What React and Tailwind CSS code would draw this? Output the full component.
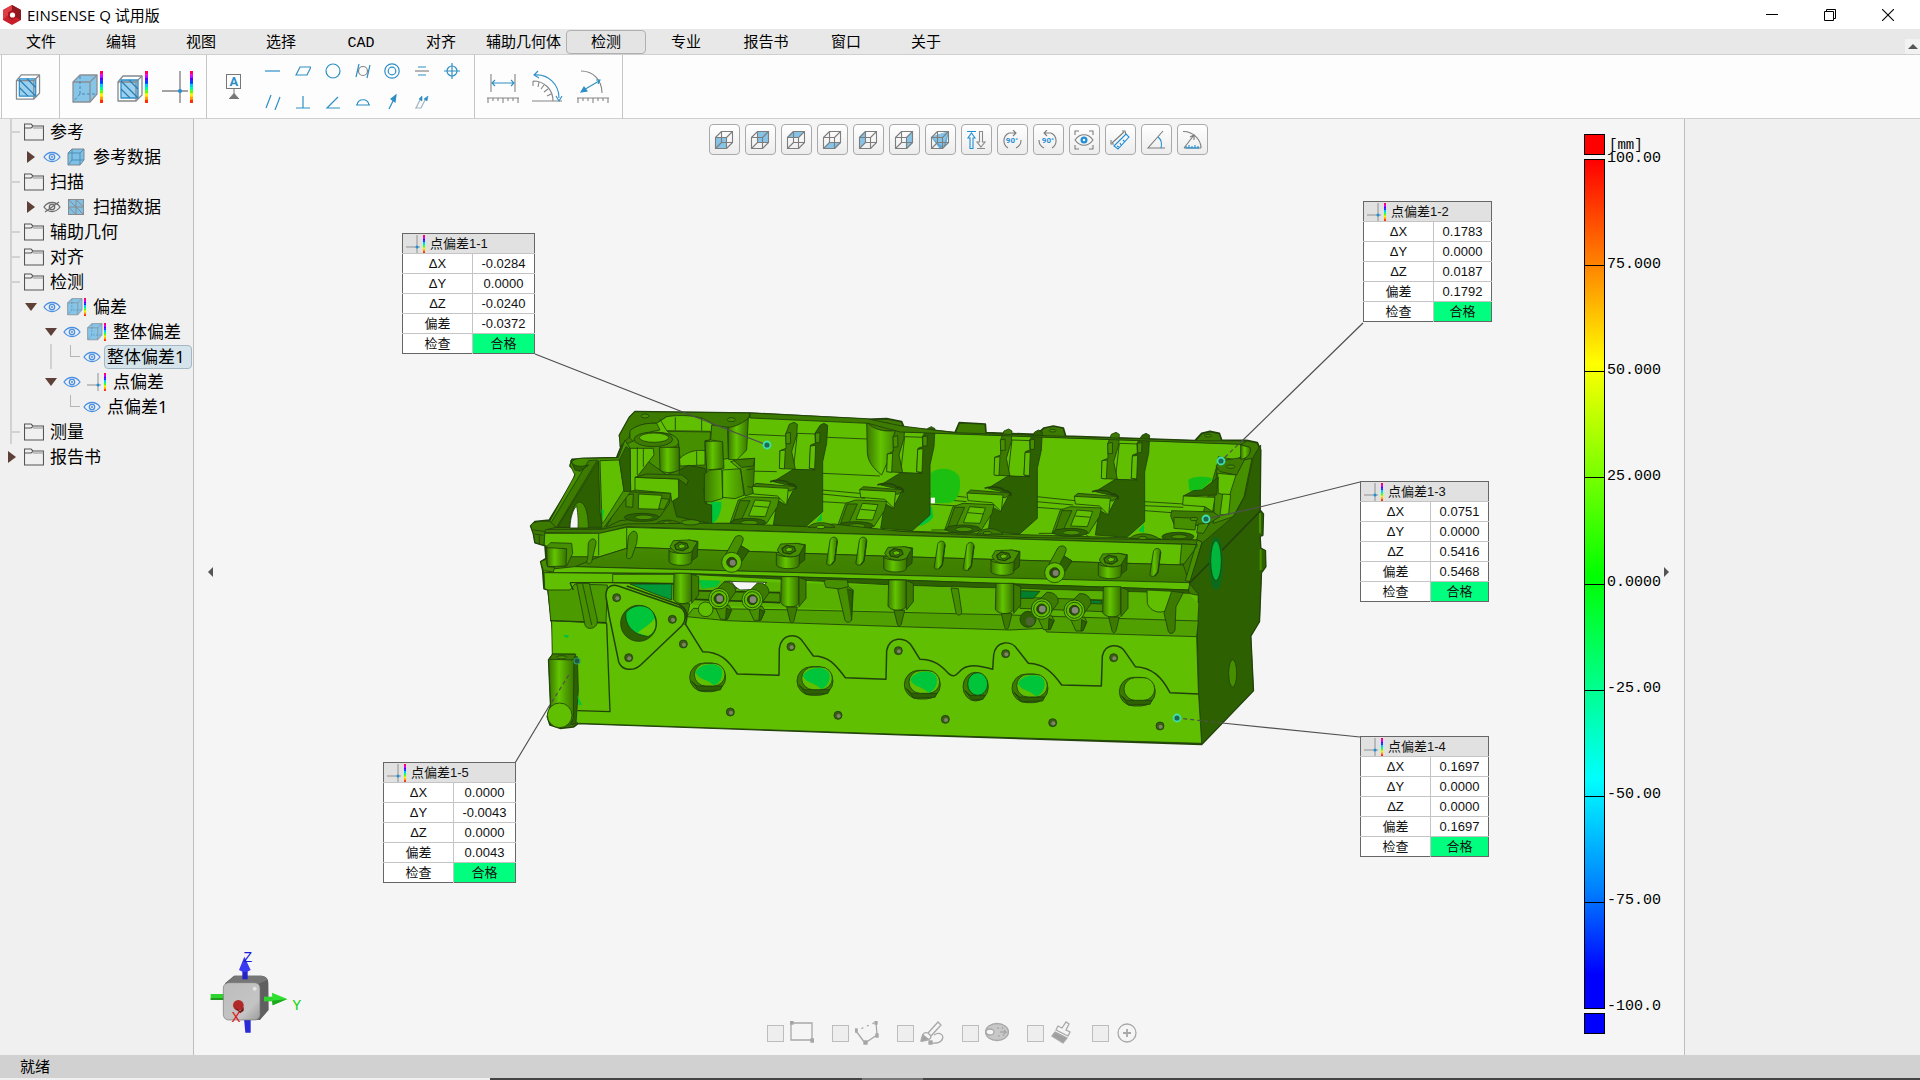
import React, { useState } from 'react';

const MENUS = ['文件', '编辑', '视图', '选择', 'CAD', '对齐', '辅助几何体', '检测', '专业', '报告书', '窗口', '关于'];

const CALLOUTS = [
  { id: '1-1', left: 208, top: 114, wide: true, dx: '-0.0284', dy: '0.0000', dz: '-0.0240', dev: '-0.0372' },
  { id: '1-2', left: 1169, top: 82, wide: false, dx: '0.1783', dy: '0.0000', dz: '0.0187', dev: '0.1792' },
  { id: '1-3', left: 1166, top: 362, wide: false, dx: '0.0751', dy: '0.0000', dz: '0.5416', dev: '0.5468' },
  { id: '1-4', left: 1166, top: 617, wide: false, dx: '0.1697', dy: '0.0000', dz: '0.0000', dev: '0.1697' },
  { id: '1-5', left: 189, top: 643, wide: true, dx: '0.0000', dy: '-0.0043', dz: '0.0000', dev: '0.0043' },
];

const SCALE = ['100.00', '75.000', '50.000', '25.000', '0.0000', '-25.00', '-50.00', '-75.00', '-100.0'];

// ---------- shared icons ----------

function Rainbow({ x, y = 0, h = 32, w = 3 }) {
  const colors = ['#ff0060', '#e000ff', '#5000ff', '#0040ff', '#00c8ff', '#00ff90', '#60ff00', '#fff000', '#ffa000', '#ff3000'];
  return colors.map((c, i) => (
    <rect key={c} x={x} y={y + (i * h) / colors.length} width={w} height={h / colors.length + 0.3} fill={c} />
  ));
}

function SolidCube() {
  return (
    <g stroke="#8a8f94" strokeWidth="1.3" fill="#86c5e8" strokeLinejoin="round">
      <path d="M1 8 L8 1 H25 V20 L18 28 H1 Z" />
      <path d="M1 8 H18 V28 M18 8 L25 1" fill="none" />
      <path d="M8 2 V20 H25 M8 20 L1 28" fill="none" stroke="#4b87b5" strokeWidth="1" strokeDasharray="3 2" />
    </g>
  );
}

function MeshCube() {
  return (
    <g stroke="#85898d" strokeWidth="1.3" fill="none" strokeLinejoin="round">
      <path d="M1 7 L6 1 H25 V20 L19 26 H1 Z" />
      <rect x="4" y="5" width="17" height="18" fill="#9bd0ee" stroke="#2b8fc9" />
      <path d="M1 7 H19 V26 M19 7 L25 1" />
      <path d="M4 6 L21 23 M4 14 L13 23 M12 5 L21 14" stroke="#2b7fb5" />
    </g>
  );
}

function CrossMark() {
  return (
    <g stroke="#858585" strokeWidth="1.4">
      <path d="M0 20 H26 M18 0 V32" />
      <circle cx="18" cy="20" r="2" fill="#1f8fd6" stroke="none" />
    </g>
  );
}

function Eye({ off }) {
  const c = off ? '#6c6c6c' : '#4a90e2';
  return (
    <svg className="h-3 w-[18px] shrink-0" viewBox="0 0 18 12" fill="none" stroke={c} strokeWidth="1.3">
      <path d="M1 6 C5 0 13 0 17 6 C13 12 5 12 1 6 Z" />
      <circle cx="9" cy="6" r="2.7" />
      {!off && <circle cx="9" cy="6" r="1" fill={c} stroke="none" />}
      {off && <path d="M2 11 L16 1" />}
    </svg>
  );
}

function Folder() {
  return (
    <svg className="h-[18px] w-5 shrink-0" viewBox="0 0 20 18" fill="none" stroke="#555" strokeWidth="1.1">
      <path d="M0.5 17 V1 H7 L9 3 H19.5 V17 Z" />
      <path d="M0.5 5 H7 L9 3.5" />
      <path d="M9 5 H19.5" stroke="#999" />
    </svg>
  );
}

function Arrow({ open }) {
  return (
    <svg className="h-3 w-3 shrink-0" viewBox="0 0 12 12">
      <path d={open ? 'M0 2 H12 L6 10 Z' : 'M2 0 L10 6 L2 12 Z'} fill="#5d4037" />
    </svg>
  );
}

function TreeIcon({ kind }) {
  return (
    <svg className="h-[18px] w-5 shrink-0" viewBox="0 0 20 18">
      {kind === 'cube' && (
        <g fill="#7fc0e4" stroke="#7c8890" strokeWidth="1">
          <path d="M1 5 L5 1 H17 V12 L13 17 H1 Z" />
          <path d="M5 1 V12 H17 M5 12 L1 17 M1 5 H13 V17 M13 5 L17 1" fill="none" stroke="#4d8fb8" />
        </g>
      )}
      {kind === 'mesh' && (
        <g fill="#7fc0e4" stroke="#8a8a8a" strokeWidth="1">
          <rect x="1.5" y="1.5" width="15" height="15" />
          <path d="M9 1.5 V16.5 M1.5 9 H16.5 M1.5 1.5 L9 9 M9 1.5 L16.5 9 M1.5 9 L9 16.5 M9 9 L16.5 16.5" />
        </g>
      )}
      {kind === 'deviation' && (
        <>
          <g transform="scale(0.6)"><SolidCube /></g>
          <Rainbow x={17} w={2} h={18} />
        </>
      )}
      {kind === 'point' && (
        <>
          <path d="M0 12 H14 M11 0 V18" stroke="#909090" strokeWidth="1" />
          <circle cx="11" cy="12" r="1.5" fill="#1f8fd6" />
          <Rainbow x={17} w={2} h={18} />
        </>
      )}
    </svg>
  );
}

// ---------- header ----------

function TitleBar() {
  return (
    <header className="flex h-[29px] shrink-0 items-center bg-white pl-[3px]">
      <svg className="h-5 w-[18px]" viewBox="0 0 18 20">
        <path d="M9 0 L18 5 V15 L9 20 L0 15 V5 Z" fill="#c91f2a" />
        <path d="M9 0 L18 5 V15 L9 10 Z" fill="#8e1720" />
        <path d="M0 5 L9 0 V7 L4 11 L0 15 Z" fill="#dd3d45" />
        <path d="M9 5 L13 7.500 V12.500 L9 15 L5 12.500 V7.500 Z" fill="#a8141f" />
        <circle cx="9.500" cy="10" r="2.600" fill="#fff" />
      </svg>
      <h1 className="ml-1.5 font-['Open_Sans','Noto_Sans_CJK_SC',sans-serif] text-[15px] leading-5">EINSENSE Q 试用版</h1>
      <div className="ml-auto flex">
        <button aria-label="最小化" className="flex h-[29px] w-[58px] items-center justify-center">
          <svg className="h-3 w-3" viewBox="0 0 12 12"><path d="M0 5.500 H12" stroke="#000" /></svg>
        </button>
        <button aria-label="还原" className="flex h-[29px] w-[58px] items-center justify-center">
          <svg className="h-3 w-3" viewBox="0 0 12 12" fill="none" stroke="#000">
            <path d="M0.500 2.500 H9.500 V11.500 H0.500 Z M2.500 2.500 V0.500 H11.500 V9.500 H9.500" />
          </svg>
        </button>
        <button aria-label="关闭" className="mr-[3px] flex h-[29px] w-[58px] items-center justify-center">
          <svg className="h-3 w-3" viewBox="0 0 12 12"><path d="M0 0 L12 12 M12 0 L0 12" stroke="#000" strokeWidth="1.1" /></svg>
        </button>
      </div>
    </header>
  );
}

function MenuBar({ active, onSelect }) {
  return (
    <nav className="flex h-[26px] shrink-0 border-b border-[#cfcfcf] bg-[#e8e8e8] pl-px font-['Liberation_Mono','Noto_Sans_CJK_SC',monospace] text-[15px]">
      {MENUS.map((m) => (
        <button
          key={m}
          onClick={() => onSelect(m)}
          className={`mt-px flex h-6 items-center justify-center border pt-1 leading-[18px] whitespace-nowrap ${m.length > 4 ? 'w-[85px]' : 'w-20'} ${m === active ? 'rounded-sm border-[#b0b0b0] bg-[#e4e4e4]' : 'border-transparent'}`}
        >
          {m}
        </button>
      ))}
      <button aria-label="收起工具栏" className="mt-auto ml-auto flex h-[15px] w-[15px] items-center justify-center bg-[#f2f2f2]">
        <svg className="h-[5px] w-2.5" viewBox="0 0 10 5"><path d="M0 5 L5 0 L10 5 Z" fill="#555" /></svg>
      </button>
    </nav>
  );
}

const B = '#2d8fc4';
const G = '#858585';

const GDT = [
  { name: '直线度', d: <path d="M0 8 H15" /> },
  { name: '平面度', d: <path d="M1 12 L5 4 H16 L12 12 Z" /> },
  { name: '圆度', d: <circle cx="8" cy="8" r="7" /> },
  { name: '圆柱度', d: <><circle cx="8" cy="8" r="4.500" stroke={G} /><path d="M4 1 L1 14 M15 2 L12 15" /></> },
  { name: '同心度', d: <><circle cx="8" cy="8" r="7.200" /><circle cx="8" cy="8" r="3.800" /></> },
  { name: '对称度', d: <><path d="M4 4 H12 M4 12 H12" /><path d="M1 8 H15" stroke={G} /></> },
  { name: '位置度', d: <><circle cx="8" cy="8" r="5" /><path d="M8 0 V16 M0 8 H16" /></> },
  { name: '平行度', d: <path d="M6 1 L1 14 M15 3 L10 16" /> },
  { name: '垂直度', d: <path d="M8 2 V14 M1 14 H15" /> },
  { name: '倾斜度', d: <path d="M13 3 L2 14 H15" /> },
  { name: '轮廓度', d: <path d="M1 11 H15 M2 11 C3 4 13 4 14 11" /> },
  { name: '跳动', d: <><path d="M5 15 L10 5" /><path d="M12 1 L7 5 L11 8 Z" fill={B} /></> },
  { name: '全跳动', d: <><path d="M1 14 H7 L11 6 M2 14 L6 6" stroke="#9fb3c0" /><path d="M8 2 L5 5 L8 7 Z M14 2 L10 5 L13 7 Z" fill={B} strokeWidth="0.6" /></> },
];

function Ribbon() {
  return (
    <div className="flex h-16 shrink-0 border-b border-[#cfcfcf] bg-[#fdfdfd] pl-px">
      <div className="flex w-[59px] items-center border-x border-[#c4c4c4] pl-[13px]">
        <button aria-label="网格">
          <svg className="h-[26px] w-[26px]" viewBox="0 0 26 27"><MeshCube /></svg>
        </button>
      </div>
      <div className="flex w-[147px] items-center gap-[13px] border-r border-[#c4c4c4] pl-3">
        <button aria-label="整体偏差">
          <svg className="h-8 w-8" viewBox="0 0 32 32"><g transform="translate(0 3)"><SolidCube /></g><Rainbow x={28} /></svg>
        </button>
        <button aria-label="截面偏差">
          <svg className="h-8 w-8" viewBox="0 0 32 32"><g transform="translate(0 4)"><MeshCube /></g><Rainbow x={28} /></svg>
        </button>
        <button aria-label="点偏差">
          <svg className="h-8 w-8" viewBox="0 0 32 32"><CrossMark /><Rainbow x={28} /></svg>
        </button>
      </div>
      <div className="flex w-[268px] items-center border-r border-[#c4c4c4] pl-[19px]">
        <button aria-label="基准" className="flex w-4 flex-col items-center">
          <span className="flex h-[15px] w-[15px] items-center justify-center border border-[#777] font-['Roboto',sans-serif] text-[13px] leading-3 font-bold text-[#2d8fc4]">A</span>
          <svg className="h-2.5 w-2.5" viewBox="0 0 10 10"><path d="M5 0 V6 M0 10 L5 4.500 L10 10 Z" fill="#777" stroke="#777" /></svg>
        </button>
        <div className="ml-[23px] grid grid-cols-7 gap-y-[15px]">
          {GDT.map((g) => (
            <button key={g.name} aria-label={g.name} className="flex w-[30px] justify-start">
              <svg className="h-4 w-4" viewBox="0 0 16 16" fill="none" stroke={B} strokeWidth="1.2">{g.d}</svg>
            </button>
          ))}
        </div>
      </div>
      <div className="flex w-[148px] items-center gap-[13px] border-r border-[#c4c4c4] pl-3">
        <button aria-label="长度">
          <svg className="h-[33px] w-8" viewBox="0 0 32 33" fill="none" stroke={G} strokeWidth="1.1">
            <path d="M4 4 V22 M28 4 V22 M0 28 H32 M1 28 V33 M6 28 V31 M11 28 V31 M16 28 V33 M21 28 V31 M26 28 V31 M31 28 V33" />
            <path d="M5 13 H27 M8 10 L5 13 L8 16 M24 10 L27 13 L24 16" stroke={B} />
          </svg>
        </button>
        <button aria-label="角度">
          <svg className="h-[33px] w-8" viewBox="0 0 32 33" fill="none" stroke={G} strokeWidth="1.1">
            <path d="M1 11 C12 11 21 19 21 31 M0 31 H30 M1 11 V16 M7 12 L6 17 M12 15 L9 19 M16 19 L12 22 M19 24 L15 26" />
            <path d="M3 5 C16 4 27 14 27 28 M6 1 L2 5 L7 8 M24 26 L27 31 L30 26" stroke={B} />
          </svg>
        </button>
        <button aria-label="半径">
          <svg className="h-[33px] w-8" viewBox="0 0 32 33" fill="none" stroke={G} strokeWidth="1.1">
            <path d="M4 1 C16 1 25 10 25 23 M0 28 H32 M1 28 V33 M6 28 V31 M11 28 V31 M16 28 V33 M21 28 V31 M26 28 V31 M31 28 V33" />
            <path d="M5 21 L22 11 M19 10 L23 10 L21 14" stroke={B} />
            <path d="M4 22 L7 17 L10 21 Z" fill={B} stroke={B} />
          </svg>
        </button>
      </div>
    </div>
  );
}

// ---------- model tree ----------

const TREE = [
  { type: 'folder', label: '参考' },
  { type: 'data', label: '参考数据', icon: 'cube' },
  { type: 'folder', label: '扫描' },
  { type: 'data', label: '扫描数据', icon: 'mesh', off: true },
  { type: 'folder', label: '辅助几何' },
  { type: 'folder', label: '对齐' },
  { type: 'folder', label: '检测' },
  { type: 'data', label: '偏差', icon: 'deviation', open: true },
  { type: 'group', label: '整体偏差', icon: 'deviation' },
  { type: 'leaf', label: '整体偏差1', guide: true },
  { type: 'group', label: '点偏差', icon: 'point' },
  { type: 'leaf', label: '点偏差1' },
  { type: 'folder', label: '测量' },
  { type: 'root', label: '报告书' },
];

function TreeRow({ node, selected, onSelect }) {
  const inTrunk = node.type !== 'root';
  return (
    <li className="flex h-[25px] items-center pl-2.5">
      <span className={`h-full w-0.5 shrink-0 ${inTrunk ? 'bg-[#d2d2d2]' : ''}`} />
      {node.type === 'folder' && <><span className="mr-1 h-0.5 w-2 bg-[#d2d2d2]" /><Folder /></>}
      {node.type === 'root' && <span className="-ml-1.5 flex items-center gap-1.5"><Arrow /><Folder /></span>}
      {node.type === 'data' && (
        <span className="ml-[13px] flex items-center gap-1.5"><Arrow open={node.open} /><Eye off={node.off} /><TreeIcon kind={node.icon} /></span>
      )}
      {node.type === 'group' && (
        <span className="ml-[33px] flex items-center gap-1.5"><Arrow open /><Eye /><TreeIcon kind={node.icon} /></span>
      )}
      {node.type === 'leaf' && (
        <>
          <span className={`ml-[38px] h-full w-0.5 ${node.guide ? 'bg-[#d2d2d2]' : ''}`} />
          <span className="mr-[3px] mb-3 ml-[18px] h-3 w-2.5 border-b border-l border-[#b5b5b5]" />
          <Eye />
        </>
      )}
      <button
        onClick={() => onSelect(node.label)}
        className={`ml-[3px] h-6 border px-0.5 text-left text-[17px] leading-5 whitespace-nowrap ${selected ? 'w-[88px] rounded-sm border-[#a3b8c4] bg-[#d5e3ea]' : 'border-transparent'}`}
      >
        {node.label}
      </button>
    </li>
  );
}

function ModelTree() {
  const [sel, setSel] = useState('整体偏差1');
  return (
    <aside className="w-[194px] shrink-0 border-r border-[#bdbdbd] bg-[#f0f0f0]">
      <ul>
        {TREE.map((n) => (
          <TreeRow key={n.label} node={n} selected={sel === n.label} onSelect={setSel} />
        ))}
      </ul>
    </aside>
  );
}

// ---------- 3D scene ----------

const BRIGHT = '#5fbf00';
const MID = '#469000';
const SHADE = '#3c7a00';
const DARK = '#2d6000';
const EDGE = '#22420c';
const TEAL = '#00c43a';

function Tower() {
  return (
    <g>
      <path d="M832 130 L890 132 L885 242 L820 238 Z" fill={BRIGHT} />
      <path d="M808 103 L822 97 L832 103 L830 135 L815 185 L826 238 L780 235 L780 182 L798 175 L798 130 Z" fill={SHADE} />
      <path d="M780 182 L796 180 L793 237 L778 235 Z" fill={BRIGHT} />
      <path d="M797 130 L811 127 L812 160 L798 162 Z" fill={MID} />
      <path d="M900 106 L912 100 L923 106 L920 160 L908 215 L908 365 L855 412 L760 405 L772 330 L797 345 L825 290 L760 275 L820 238 L885 240 L868 235 L872 165 L886 160 L885 130 Z" fill={DARK} />
      <path d="M871 168 L887 166 L884 237 L868 235 Z" fill={BRIGHT} />
      <path d="M886 130 L900 128 L899 158 L887 158 Z" fill={MID} />
      <path d="M697 289 L708 280 L830 290 L812 303 Z" fill={SHADE} />
      <path d="M697 289 L805 295 L800 345 L772 318 L700 312 Z" fill={BRIGHT} />
      <path d="M750 275 C770 268 800 270 808 282 C815 280 830 285 828 298" fill="none" strokeWidth="5" />
      <path d="M655 330 L685 320 L778 324 L772 350 L740 400 L630 400 Z" fill={MID} />
      <path d="M660 332 L690 332 L665 388 L640 390 Z" fill={SHADE} />
      <path d="M705 330 L752 334 L736 380 L686 378 Z" fill={BRIGHT} />
      <path d="M700 348 L746 352" />
      <ellipse cx="685" cy="397" rx="52" ry="12" fill={DARK} />
      <ellipse cx="688" cy="398" rx="26" ry="7" fill={MID} />
      <path d="M640 400 L590 400 M730 400 L740 412" />
    </g>
  );
}

function Bolt() {
  return (
    <g>
      <path d="M462 550 H515 V628 C510 645 468 645 460 628 Z" fill="url(#cyl)" />
      <path d="M515 552 L536 560 V615 L515 640 Z" fill={SHADE} />
      <path d="M478 641 L510 641 L500 682 C497 690 490 690 488 682 Z" fill={SHADE} />
      <path d="M505 450 L534 454 L532 500 L512 515 Z" fill={DARK} />
      <path d="M447 480 C450 492 512 495 517 482 L515 518 C505 530 455 528 447 516 Z" fill="url(#cyl)" />
      <path d="M450 470 L460 452 L510 450 L532 456 L515 485 C495 495 460 492 450 470 Z" fill={MID} />
      <path d="M464 466 L478 456 L500 460 L505 472 L488 482 L468 478 Z" fill={SHADE} strokeWidth="4" />
      <path d="M474 467 L484 462 L496 465 L494 473 L480 476 Z" fill={BRIGHT} />
    </g>
  );
}

function Rib({ x, y }) {
  return (
    <g transform={`translate(${x} ${y})`}>
      <path d="M0 10 C2 -4 22 -4 22 10 L14 70 C8 88 -14 86 -10 74 Z" fill="url(#cyl)" />
      <path d="M22 10 L14 70 L4 82" fill="none" strokeWidth="4" />
    </g>
  );
}

function RingBoss({ x, y }) {
  return (
    <g transform={`translate(${x} ${y})`}>
      <path d="M10 -75 C20 -85 38 -80 34 -65 L28 -50 L52 -35 L25 0 L-20 -20 Z" fill={MID} />
      <path d="M28 -50 L52 -35 L30 -2 L15 -25 Z" fill={DARK} />
      <circle r="30" fill={BRIGHT} />
      <circle r="15" fill="#30450e" />
      <circle cx="3" cy="1" r="9" fill="#7b8070" stroke="none" />
    </g>
  );
}

function Tube({ x, y }) {
  return (
    <g transform={`translate(${x} ${y})`}>
      <path d="M-10 -25 L15 -50 C35 -52 50 -40 50 -20 L25 15 Z" fill={SHADE} />
      <path d="M-12 25 L30 20 L38 35 L25 62 L5 62 Z" fill={MID} />
      <path d="M22 28 L36 35 L27 60 L20 62 Z" fill={DARK} />
      <circle r="31" fill={BRIGHT} />
      <circle r="24" fill="none" />
      <circle r="15" fill="#30450e" />
      <circle cx="2" r="10" fill="#85897c" stroke="none" />
    </g>
  );
}

function Port({ x, y, rx = 52, inner = TEAL, glint }) {
  return (
    <g transform={`translate(${x} ${y})`}>
      <rect x={-rx - 2} y="-43" width={rx * 2 + 4} height="86" rx="43" fill={SHADE} />
      <path d={`M${-rx + 4} 12 L${-rx + 20} 26 L${rx - 8} 26 L${rx - 14} 38 L${-rx + 26} 40 Z`} fill={DARK} />
      <rect x={-rx + 12} y="-42" width={rx * 2 - 12} height="68" rx="34" fill={glint ? BRIGHT : inner} />
      {glint && <path d={`M${-rx + 16} -14 C${-rx + 24} -40 ${rx - 24} -50 ${rx - 10} -24 C${rx - 2} 0 ${rx - 20} 22 ${rx - 34} 24 C0 4 ${-rx + 30} 10 ${-rx + 16} -14 Z`} fill={inner} stroke="none" />}
    </g>
  );
}

function Hole({ x, y }) {
  return (
    <g>
      <circle cx={x} cy={y} r="12" fill="#3c5c18" />
      <circle cx={x + 2} cy={y + 2} r="6" fill="#7d8468" stroke="none" />
    </g>
  );
}

// cylinder head, drawn at three units per pixel
function CylinderHead() {
  const bays = [0, 1, 2, 3];
  const ribs = [[930, 442], [1018, 442], [1253, 454], [1340, 458], [1900, 476]];
  const holes = [
    [490, 762], [813, 770], [1135, 782], [1457, 791], [1781, 803],
    [631, 966], [954, 976], [1276, 988], [1598, 998], [1920, 1008],
  ];
  return (
    <g transform="translate(520 390) scale(0.333333)" stroke={EDGE} strokeWidth="2.600" strokeLinejoin="round">
      <defs>
        <linearGradient id="cyl" x1="0" x2="1">
          <stop offset="0" stopColor="#3a7600" />
          <stop offset="0.4" stopColor="#62c400" />
          <stop offset="1" stopColor="#377000" />
        </linearGradient>
        <linearGradient id="shelf" x1="0" x2="0" y1="0" y2="1">
          <stop offset="0" stopColor="#448a00" />
          <stop offset="1" stopColor="#3b7800" />
        </linearGradient>
      </defs>

      {/* outer shell */}
      <path d="M345 65 L690 69 L1040 88 L1100 86 L1145 95 L1152 112 L1305 128 L1318 98 L1396 102 L1398 128 L1550 133 L1572 114 L1600 108 L1630 114 L1637 138 L2025 152 L2045 130 L2070 124 L2098 130 L2105 150 L2180 151 L2212 158 L2222 180 L2220 360 L2230 372 L2228 436 L2220 438 L2222 475 L2236 482 L2237 530 L2224 548 L2218 695 L2192 738 L2200 902 L2045 1063 L1140 1034 L175 1000 L160 1011 L120 1015 L90 1005 L82 980 L92 945 L86 810 L100 792 L98 720 L84 600 L72 596 L68 540 L62 515 L78 505 L75 467 L45 458 L40 430 L32 408 L45 395 L88 390 L160 272 L168 243 L150 228 L156 208 L205 205 L290 203 L305 165 L298 136 L328 82 Z" fill={SHADE} strokeWidth="5" />

      {/* back wall and cavity floor */}
      <path d="M690 82 L1040 96 L1044 118 L1140 125 L2160 162 L2190 175 L2150 210 L2090 230 L2040 400 L2030 450 L560 405 L560 150 L640 110 Z" fill={BRIGHT} />
      <path d="M685 133 L800 138 M922 142 L1042 147 M680 243 L770 245 M908 250 L1080 258 M905 300 L1040 312 M905 312 L1035 325 M905 335 L990 340 M1230 310 L1340 322 M1230 325 L1340 335 M1228 342 L1310 348 M1550 320 L1665 332 M1550 335 L1660 345 M1550 352 L1630 358 M1874 335 L1990 342 M1874 347 L1990 352 M1874 362 L1955 368" fill="none" />
      <path d="M1232 250 C1250 230 1300 230 1318 260 C1325 300 1315 330 1290 338 L1232 340 Z" fill="#1cc010" stroke="none" />
      <path d="M1235 350 L1240 380 C1225 400 1210 405 1195 408 L1195 350 Z" fill={TEAL} stroke="none" />
      <path d="M2005 270 C2020 255 2075 260 2078 268 L2040 302 L2008 302 Z" fill="#12c018" stroke="none" />
      <path d="M572 335 L604 335 C606 370 590 395 574 403 Z" fill={TEAL} stroke="none" />
      <path d="M890 395 L905 370 L905 392 Z M1855 422 L1872 402 L1872 428 Z" fill={TEAL} stroke="none" />
      <rect x="1232" y="323" width="13" height="17" fill="#f5f5f5" stroke="none" />
      <path d="M1040 96 C1070 130 1120 125 1145 118 L1145 135 L1110 200 L1085 255 C1060 235 1044 215 1042 190 Z" fill="url(#cyl)" />
      <path d="M625 112 C640 100 680 95 685 84 L680 180 L650 210 L625 208 Z" fill="url(#cyl)" />

      {/* left chamber */}
      <path d="M345 65 L690 69 L686 84 C660 105 640 112 620 112 L575 108 C560 80 500 72 440 80 L410 100 C360 100 330 115 328 140 L300 170 L298 136 L328 82 Z" fill={SHADE} />
      <ellipse cx="375" cy="78" rx="12" ry="6" fill={MID} />
      <ellipse cx="634" cy="89" rx="12" ry="6" fill={MID} />
      <ellipse cx="1097" cy="104" rx="12" ry="6" fill={MID} />
      <path d="M330 140 C335 110 370 98 410 100 L440 80 C490 72 560 78 578 105 L572 150 L555 152 L555 225 L480 228 L475 150 Z" fill={BRIGHT} />
      <path d="M330 122 C350 105 380 98 410 100 L420 120 C380 125 350 140 345 160 L330 145 Z" fill={MID} />
      <path d="M420 88 L440 122 L572 124 M466 82 V120 M545 82 V122" fill="none" />
      <path d="M442 124 L572 126 L570 150 L555 152 L555 182 C530 178 500 185 480 205 L475 150 Z" fill={MID} />
      <path d="M530 184 V225" />
      <path d="M343 152 C350 120 460 118 474 150 C480 165 465 175 440 172 L478 180 L478 238 L440 255 L330 175 L300 170 Z" fill={MID} />
      <ellipse cx="400" cy="148" rx="58" ry="22" fill={SHADE} />
      <ellipse cx="402" cy="143" rx="44" ry="14" fill={BRIGHT} />
      <path d="M418 172 L478 172 L478 240 C460 250 430 250 420 240 Z" fill="url(#cyl)" />
      <path d="M330 175 L400 175 L402 195 L350 262 L346 300 L330 305 Z" fill={BRIGHT} />
      <path d="M352 172 V255 M370 175 V230" />
      <path d="M478 240 L505 226 L555 235 L560 250 L552 300 L556 340 L575 345 L575 402 L520 390 L470 380 L452 310 L476 295 Z" fill={DARK} />
      <path d="M345 262 L475 267 L476 322 L455 335 L452 310 L345 300 Z" fill={BRIGHT} />
      <path d="M345 262 L380 252 L485 255 L505 270 L500 285 L475 267 Z" fill={SHADE} />
      <path d="M555 155 L608 152 L612 235 L560 240 Z" fill="url(#cyl)" />
      <path d="M575 105 L622 112 L625 205 L610 208 L608 155 L572 150 Z" fill={MID} />
      <path d="M553 252 L570 240 L605 238 L608 325 L572 336 L553 335 Z M608 240 L662 236 L672 316 L645 326 L608 322 Z M632 215 L660 208 L704 205 L700 310 L675 318 L662 240 Z" fill="url(#cyl)" />
      <path d="M640 210 L704 205 L700 228 L665 232 Z M680 240 L700 236 M682 290 L698 292" fill={SHADE} />
      <path d="M318 305 L452 310 L448 340 L420 380 L300 392 L258 412 Z" fill={SHADE} />
      <path d="M356 312 L426 316 L418 358 L355 356 Z" fill={BRIGHT} />
      <path d="M318 315 L340 312 L338 352 L318 350 Z M424 325 L448 328 L432 358 L416 356 Z" fill={MID} />
      <ellipse cx="365" cy="382" rx="52" ry="12" fill={DARK} />
      <ellipse cx="372" cy="382" rx="28" ry="7" fill={MID} />

      {/* left bracket */}
      <path d="M150 225 C155 205 180 203 205 205 L295 203 L315 150 L330 175 L332 305 L250 415 L110 412 L88 395 L165 255 Z" fill={MID} />
      <path d="M235 212 L240 365 L246 412 L112 412 Z" fill={DARK} />
      <path d="M240 212 L298 210 L312 300 L252 395 L246 400 Z" fill={BRIGHT} />
      <path d="M298 210 L318 170 L330 178 L332 304 L312 304 Z" fill={DARK} />
      <path d="M206 212 L232 210 L110 412 L92 400 Z" fill={SHADE} />
      <path d="M150 414 C150 370 165 335 180 336 C200 340 205 385 205 414 Z" fill={MID} />
      <path d="M150 414 C150 385 160 355 170 348 C175 375 175 400 174 414 Z" fill="#f5f5f5" />
      <path d="M244 358 L252 360 L248 392 Z" fill={TEAL} stroke="none" />
      <path d="M152 212 C160 230 180 232 206 225 L180 244 L165 240 Z" fill={DARK} />

      {bays.map((i) => (
        <g key={i} transform={`translate(${i * 322} ${i * 10})`}><Tower /></g>
      ))}

      {/* right chamber */}
      <path d="M2095 200 L2160 212 L2196 205 L2172 320 L2140 380 L2080 400 L2085 300 Z" fill={MID} />
      <path d="M2088 228 C2100 205 2150 208 2178 200 L2150 255 L2100 245 Z" fill={SHADE} />
      <path d="M2093 250 L2148 255 L2128 318 L2095 310 Z" fill={BRIGHT} />
      <path d="M2108 312 L2132 314 L2126 372 L2100 375 Z" fill={BRIGHT} />
      <path d="M2162 165 L2190 172 C2196 185 2185 205 2162 208 Z" fill="url(#cyl)" />
      <path d="M2020 302 L2045 300 L2095 262 L2090 315 L1990 318 Z" fill={DARK} />
      <path d="M1990 318 L2085 322 L2078 365 L2055 350 L1988 345 Z" fill={BRIGHT} />
      <path d="M1955 362 L2080 366 L2100 380 L2060 405 L1965 410 L1952 378 Z" fill={SHADE} />
      <path d="M1962 382 L2030 385 L2025 420 L1962 415 Z M2035 402 L2068 400 L2050 430 L2030 428 Z" fill={MID} />
      <ellipse cx="2022" cy="387" rx="12" ry="5" fill={MID} />
      <ellipse cx="2132" cy="230" rx="13" ry="5" fill={MID} />
      <ellipse cx="1974" cy="440" rx="48" ry="13" fill={DARK} />
      <ellipse cx="1978" cy="440" rx="24" ry="6" fill={MID} />
      <ellipse cx="1598" cy="122" rx="10" ry="4" fill={MID} />
      <ellipse cx="2064" cy="137" rx="10" ry="4" fill={MID} />

      {/* rear and front rim */}
      <path d="M690 69 L1040 86 L1145 108 L1305 128 L2025 152 L2180 153 L2165 163 L1140 126 L1044 100 L690 84 Z" fill={SHADE} />
      <path d="M72 418 L245 418 L320 402 L480 400 L620 400 L860 410 L940 402 L1140 424 L1500 442 L1780 447 L2030 450 L2045 455 L2030 464 L1140 436 L320 410 L240 430 L75 428 Z" fill={SHADE} />
      <path d="M410 400 C425 385 470 390 480 400 Z M865 412 C880 392 930 395 945 412 Z M1370 432 C1385 412 1430 410 1450 432 Z M1830 445 C1845 428 1890 425 1920 448 Z" fill={SHADE} />
      <ellipse cx="440" cy="397" rx="11" ry="4" fill={MID} />
      <ellipse cx="512" cy="397" rx="28" ry="8" fill={MID} />
      <ellipse cx="902" cy="411" rx="13" ry="5" fill={BRIGHT} />
      <ellipse cx="1402" cy="429" rx="13" ry="5" fill={MID} />
      <ellipse cx="1868" cy="444" rx="13" ry="5" fill={MID} />

      {/* front upper wall and shelf */}
      <path d="M72 430 L238 430 L320 412 L1140 436 L2030 464 L1990 525 L1140 500 L330 472 L240 500 L150 500 L72 465 Z" fill={BRIGHT} />
      <path d="M240 500 L330 472 L1140 500 L1990 525 L2010 584 L1140 556 L165 530 Z" fill="url(#shelf)" />
      <path d="M236 432 V496 M320 412 V474" />
      <path d="M1985 462 L2032 464 L2030 470 L1992 522 L1980 522 Z M2032 450 L2046 456 L2012 575 L1996 572 Z" fill={MID} />
      <path d="M68 540 L165 530 L1140 556 L2010 578 L2005 600 L1140 570 L490 550 L165 548 L72 548 Z" fill={BRIGHT} />
      <path d="M490 552 L1140 570 L2005 600 L2010 612 L1140 586 L520 568 Z" fill={DARK} />

      {/* side face */}
      <path d="M2222 165 L2220 360 L2230 372 L2228 436 L2220 438 L2222 475 L2236 482 L2237 530 L2224 548 L2218 695 L2192 738 L2200 902 L2045 1063 L2035 900 L2032 740 L2035 612 L2008 580 L2046 460 L2142 378 L2175 318 L2200 200 Z" fill={DARK} />
      <path d="M2222 362 L2105 482 L2008 580" fill="none" strokeWidth="5" />
      <ellipse cx="2088" cy="520" rx="21" ry="80" fill="#0b6b1c" stroke="none" />
      <ellipse cx="2088" cy="512" rx="16" ry="60" fill="#00b63c" />
      <ellipse cx="2138" cy="850" rx="12" ry="41" fill={MID} />
      <path d="M2220 370 V430 M2222 478 V540" stroke={MID} strokeWidth="6" />

      {/* front lower face */}
      <path d="M72 548 L490 552 L1140 586 L2005 610 L2035 616 L2030 740 L2035 900 L2045 1060 L1140 1033 L175 1000 L100 960 L95 700 L84 600 L74 596 Z" fill={BRIGHT} />
      <path d="M84 600 L150 600 L165 582 L262 585 L258 700 L92 692 Z" fill="#4b9a00" />
      <path d="M520 570 L2005 612 L2035 640 L2032 695 L1680 680 L520 645 Z" fill="#58b000" stroke="none" />
      <path d="M520 655 L840 660 L1140 667 L1470 675 L2035 693 L2030 740 L1580 726 L1575 715 L1470 720 L1140 710 L620 692 L500 680 Z" fill="#4fa000" />
      <path d="M278 553 L470 553 L470 580 L278 578 Z" fill={BRIGHT} />
      <path d="M150 578 L278 578 L470 582 M160 600 L150 578 M90 692 L260 698" fill="none" strokeWidth="4" />
      <path d="M330 582 L456 582 L455 630 L400 610 Z" fill="#009a3a" />
      <path d="M536 570 L602 572 L590 590 L545 596 Z" fill={TEAL} stroke="none" />
      <path d="M170 580 L208 580 L232 690 C235 718 200 722 195 705 Z" fill={MID} />
      <path d="M188 582 L215 705" />
      <path d="M622 574 L740 577 L722 598 L660 600 Z" fill="#f5f5f5" />
      <path d="M614 574 L634 574 L650 596 L636 598 Z" fill="#8a8f86" />
      <path d="M525 602 L780 608 L780 638 L525 628 Z" fill={MID} />
      <path d="M525 602 L780 608 M525 628 L780 638" strokeWidth="5" />
      <path d="M1500 622 L1750 630 L1750 665 L1500 655 Z" fill={MID} />
      <path d="M1500 602 L1560 604 L1540 625 L1500 625 Z M1700 630 L1745 632 L1745 642 L1700 640 Z" fill="#007f2c" />
      <circle cx="557" cy="658" r="22" fill={BRIGHT} />
      <circle cx="1524" cy="688" r="24" fill={DARK} />
      <circle cx="1530" cy="694" r="13" fill="#4b6430" stroke="none" />

      {bays.concat(4).map((i) => (
        <g key={i} transform={`translate(${i * 322} ${i * 10})`}><Bolt /></g>
      ))}
      {ribs.map(([x, y]) => <Rib key={x} x={x} y={y} />)}
      <path d="M205 460 C212 440 230 445 228 460 L215 515 C208 528 195 520 203 508 Z" fill={MID} />
      <path d="M325 440 C335 418 352 418 352 440 L350 460 L335 502 C325 510 318 505 320 495 Z" fill={MID} />
      <RingBoss x={635} y={517} />
      <RingBoss x={1604} y={548} />
      <Tube x={597} y={626} />
      <Tube x={697} y={629} />
      <Tube x={1565} y={657} />
      <Tube x={1663} y={661} />

      {/* webs under the shelf */}
      <path d="M912 575 L920 568 L982 570 L985 590 L970 598 L918 592 Z" fill={MID} />
      <path d="M953 598 L985 590 L1000 600 L995 690 C988 700 978 698 975 690 Z" fill={MID} />
      <path d="M980 596 L998 602 L994 690" fill={DARK} />
      <path d="M1293 594 L1315 596 L1325 665 C1325 678 1312 678 1308 668 Z" fill={MID} />
      <path d="M1881 600 L1960 604 L1958 640 C1945 675 1895 675 1882 640 Z" fill={BRIGHT} />
      <path d="M1955 604 L1990 608 L1968 650 L1965 720 C1960 735 1945 732 1944 720 L1932 670 Z" fill={SHADE} />

      {/* left corner lugs */}
      <path d="M32 408 C35 395 60 392 90 394 L108 412 L75 420 L72 466 L45 458 L40 430 Z" fill={SHADE} />
      <path d="M40 420 L72 424 M44 432 L70 436 M58 436 V464" />
      <path d="M80 470 L92 458 L155 460 L158 490 L140 528 L82 528 Z" fill={MID} />
      <path d="M80 473 L140 476 L138 528 L82 530 Z" fill="url(#cyl)" />
      <path d="M62 515 L78 508 L82 530 L104 532 L100 546 L70 542 Z" fill={MID} />

      {/* manifold gasket outline */}
      <path d="M495 700 L548 785 C600 785 625 810 652 852 L777 856 L778 775 C784 732 830 726 850 757 L880 798 C930 798 950 830 976 863 L1098 868 L1100 782 C1108 740 1155 738 1175 768 L1200 808 C1240 808 1262 825 1285 850 C1300 862 1305 858 1318 845 C1340 820 1375 825 1418 838 L1421 795 C1428 750 1475 750 1492 778 L1525 820 C1570 822 1595 842 1625 885 L1744 888 L1747 798 C1755 760 1800 758 1817 788 L1846 830 C1895 832 1925 860 1950 908 L2036 912" fill="none" strokeWidth="4.500" />
      <Port x={563} y={862} glint />
      <Port x={885} y={873} glint />
      <Port x={1207} y={884} glint />
      <Port x={1367} y={890} rx={36} />
      <Port x={1530} y={895} glint />
      <Port x={1852} y={905} inner={BRIGHT} />
      {holes.map(([x, y]) => <Hole key={x} x={x} y={y} />)}

      {/* triangular flange */}
      <path d="M258 620 C256 595 270 580 295 588 L475 650 C500 660 500 690 485 708 L362 825 C340 845 305 842 296 815 L268 680 Z" fill={BRIGHT} strokeWidth="4.500" />
      <path d="M320 588 L480 645 C500 655 505 680 495 705" fill="none" strokeWidth="5" />
      <circle cx="356" cy="700" r="54" fill={DARK} />
      <path d="M318 668 C340 640 385 640 402 672 C412 700 408 730 385 738 C350 740 312 710 318 668 Z" fill={TEAL} />
      <path d="M352 728 C370 715 395 700 404 685 C412 712 400 732 384 738 Z" fill="#65c800" stroke="none" />
      <Hole x={290} y={623} />
      <Hole x={457} y={688} />
      <Hole x={326} y={803} />

      {/* left pipe */}
      <path d="M260 700 L270 965 L172 962" fill="none" strokeWidth="4" />
      <path d="M160 800 L172 800 L175 900 L168 1000 L155 1005 Z" fill={DARK} />
      <path d="M86 808 L98 792 L165 792 L162 812 L160 985 L150 1005 L95 1000 L92 945 Z" fill="url(#cyl)" />
      <path d="M88 808 L98 792 L168 793 L160 810 Z" fill={SHADE} />
      <ellipse cx="125" cy="802" rx="15" ry="5" fill={MID} />
      <circle cx="119" cy="976" r="37" fill={BRIGHT} />
      <path d="M130 735 L145 735 L146 742 L138 744 Z M172 915 L186 945 L176 945 Z" fill={TEAL} stroke="none" />
    </g>
  );
}

function Leaders() {
  const pins = [[767, 445], [1221, 461], [1206, 519], [1177, 718]];
  return (
    <g stroke="#505050" strokeWidth="1.2" fill="none">
      <path d="M535 354 L767 445 M1363 323 L1243 440 M1360 482 L1260 507 L1206 519 M1360 737 L1222 723 M515 763 L548 708" />
      <path d="M1243 440 L1221 461 M1222 723 L1177 718 M548 708 L570 673" strokeDasharray="4 3" />
      {pins.map(([x, y]) => (
        <circle key={x} cx={x} cy={y} r="3.500" stroke="#3fe0b0" strokeWidth="1.800" fill="#1d6a55" />
      ))}
      <circle cx="577" cy="661" r="3" stroke="#2f9a6a" fill="#1f5a3a" />
    </g>
  );
}

function AxisCube() {
  return (
    <g transform="translate(190 750) scale(0.333333)">
      <defs>
        <linearGradient id="face" x1="0" y1="0" x2="1" y2="1">
          <stop offset="0" stopColor="#bdbdbd" />
          <stop offset="0.7" stopColor="#c4c4c4" />
          <stop offset="1" stopColor="#9a9a9a" />
        </linearGradient>
      </defs>
      <path d="M62 732 H105 V750 H62 Z" fill="#2fd52f" />
      <path d="M62 744 H105 V750 H62 Z" fill="#1f9a1f" />
      <path d="M162 805 H182 V848 H166 Z" fill="#2a2ad8" />
      <path d="M105 700 L132 677 L215 677 Q235 680 235 698 L236 780 L210 810 L120 808 Z" fill="#5f5f5f" />
      <path d="M110 698 L134 677 L215 677 Q230 680 232 690 L205 702 Z" fill="#767676" />
      <rect x="100" y="698" width="110" height="112" rx="16" fill="url(#face)" stroke="#777" strokeWidth="2" />
      <circle cx="194" cy="716" r="6" fill="#e4e4e4" />
      <path d="M157 660 H173 V688 H157 Z" fill="#2525c8" />
      <path d="M163 620 L182 660 Q165 672 147 660 Z" fill="#3a3af0" />
      <path d="M222 740 H250 V754 H222 Z" fill="#2fd52f" />
      <path d="M246 728 L292 747 L248 766 Z" fill="#2fe02f" />
      <path d="M246 752 L292 747 L248 766 Z" fill="#1fa81f" />
      <circle cx="145" cy="766" r="16" fill="#b02828" />
      <path d="M133 770 L150 784 L161 770 V782 L150 790 Z" fill="#701414" />
      <g className="font-['Liberation_Mono',monospace]" fontSize="45" textAnchor="middle">
        <text x="173" y="637" fill="#1c1cd8">Z</text>
        <text x="320" y="779" fill="#10d810">Y</text>
        <text x="138" y="815" fill="#e01818">X</text>
      </g>
    </g>
  );
}

function Callout({ c }) {
  const rows = [['ΔX', c.dx], ['ΔY', c.dy], ['ΔZ', c.dz], ['偏差', c.dev]];
  return (
    <table
      style={{ left: c.left, top: c.top }}
      className={`absolute table-fixed border-collapse border border-[#666] bg-white text-center font-['Liberation_Sans','Noto_Sans_CJK_SC',sans-serif] text-[13px] leading-[18px] text-[#111] ${c.wide ? 'w-[133px]' : 'w-[129px]'}`}
    >
      <colgroup>
        <col className="w-[70px]" />
        <col />
      </colgroup>
      <thead>
        <tr className="h-5">
          <th colSpan={2} className="border-b border-[#c4c4c4] bg-[#e1e1e1] p-0 font-normal">
            <span className="flex items-center gap-1 pl-[3px]">
              <TreeIcon kind="point" />
              {`点偏差${c.id}`}
            </span>
          </th>
        </tr>
      </thead>
      <tbody>
        {rows.map(([k, v]) => (
          <tr key={k} className="h-5 border-b border-[#c4c4c4]">
            <th scope="row" className="border-r border-[#c4c4c4] p-0 font-normal">{k}</th>
            <td className="p-0">{v}</td>
          </tr>
        ))}
        <tr className="h-5">
          <th scope="row" className="border-r border-[#c4c4c4] p-0 font-normal">检查</th>
          <td className="bg-[#00ff7f] p-0">合格</td>
        </tr>
      </tbody>
    </table>
  );
}

// ---------- floating tools ----------

function WireCube({ face }) {
  return (
    <>
      <path d={face} fill="#86c3e6" stroke="none" />
      <path d="M0.500 6.500 H11.500 V17.500 H0.500 Z M6.500 0.500 H17.500 V11.500 H6.500 Z M0.500 6.500 L6.500 0.500 M11.500 6.500 L17.500 0.500 M11.500 17.500 L17.500 11.500 M0.500 17.500 L6.500 11.500" />
    </>
  );
}

function Turn({ flip }) {
  return (
    <>
      <g transform={flip ? 'matrix(-1 0 0 1 18 0)' : undefined}>
        <path d="M6 2 A8.500 8.500 0 0 0 5 17 M13 17 A8.500 8.500 0 0 0 18 9 M6 2 H13 M10 -1 L13 2 L10 5" />
      </g>
      <text x="9" y="12" textAnchor="middle" fontSize="8" fontWeight="bold" fill="#1f8fd6" stroke="none" className="font-['Roboto',sans-serif]">90°</text>
    </>
  );
}

const VIEW_TOOLS = [
  { name: '前视图', d: <WireCube face="M0 6 H12 V18 H0 Z" /> },
  { name: '后视图', d: <WireCube face="M6 0 H18 V12 H6 Z" /> },
  { name: '顶视图', d: <WireCube face="M0 6 L6 0 H18 L12 6 Z" /> },
  { name: '底视图', d: <WireCube face="M0 18 L6 12 H18 L12 18 Z" /> },
  { name: '左视图', d: <WireCube face="M0 6 L6 0 V12 L0 18 Z" /> },
  { name: '右视图', d: <WireCube face="M12 6 L18 0 V12 L12 18 Z" /> },
  { name: '轴测图', d: <><path d="M0 6 L18 0 L15 14 L9 18 Z" fill="#5ba6d2" stroke="none" /><WireCube face="M0 6 L6 4 L18 0 L12 16 Z" /></> },
  { name: '翻转', d: <><path d="M0 0.500 H9 M4.500 2 L8 7 H6 V17.500 H3 V7 H1 Z" stroke="#1f8fd6" /><path d="M10 17.500 H18 M14 16 L18 11 H15.500 V0.500 H12.500 V11 H10 Z" stroke="#8a8a8a" /></> },
  { name: '顺时针旋转', d: <Turn /> },
  { name: '逆时针旋转', d: <Turn flip /> },
  { name: '显示全部', d: <><path d="M0 4 V0 H4 M14 0 H18 V4 M18 14 V18 H14 M4 18 H0 V14 M0 9 C5 2 13 2 18 9 C13 16 5 16 0 9 Z" /><circle cx="9" cy="9" r="3.500" fill="#1f8fd6" stroke="none" /><circle cx="9" cy="9" r="1.200" fill="#fff" stroke="none" /></> },
  { name: '测距', d: <><path d="M1 12 L13 1 M0 9 V13 H3 M11 0 L14 0 L15 4" /><path d="M3 15 L15 3 L18 6 L7 18 Z M6 15 L8 16 M9 12 L10 14 M12 9 L14 11" stroke="#1f8fd6" /></> },
  { name: '测角', d: <><path d="M16 0 L1 17 H18" /><path d="M11 6 C15 9 15 13 14 17" stroke="#1f8fd6" /></> },
  { name: '测半径', d: <><path d="M0 0.500 C9 0 18 8 18 17 M1 17 L11 4 M7 6 L11 4 L11 9 M1 17 H18" /><path d="M3 17 V15 M6 17 V14 M9 17 V15 M12 17 V14 M15 17 V15 M3 17 H16" stroke="#1f8fd6" /></> },
];

function ViewToolbar() {
  return (
    <div className="flex gap-[5px] pt-[5px]">
      {VIEW_TOOLS.map((t) => (
        <button key={t.name} aria-label={t.name} className="flex h-[31px] w-[31px] items-center justify-center rounded-sm border border-[#a9a9a9] bg-linear-to-b from-white to-[#ececec]">
          <svg className="h-5 w-5" viewBox="-1 -1 20 20" fill="none" stroke="#7d7d7d" strokeWidth="1.1">{t.d}</svg>
        </button>
      ))}
    </div>
  );
}

const PICK_TOOLS = [
  { name: '矩形选择', d: <><path d="M1 2 H22 V19 H1 Z" /><path d="M0 0 H3 V3 H0 Z M21 18 H24 V21 H21 Z" fill="#a0a0a0" /></> },
  { name: '多边形选择', d: <><path d="M1 10 L10 22 L22 14 L21 1" /><path d="M1 10 L21 1" strokeDasharray="2 4" /><path d="M0 8 H2 V11 H0 Z M9 20 H12 V23 H9 Z M21 13 H23 V16 H21 Z M20 0 H22 V3 H20 Z" fill="#a0a0a0" /></> },
  { name: '画笔选择', d: <><path d="M8 12 L18 1 L21 4 L11 15 Z M8 12 C3 10 2 15 1 20 C6 20 11 19 11 15 M14 14 C20 10 26 15 21 20 C18 23 14 22 10 22" /><path d="M9 20 H12 V23 H9 Z M3 14 L8 18 L2 20 Z" fill="#a0a0a0" /></> },
  { name: '区域选择', d: <><ellipse cx="12" cy="11" rx="11.500" ry="8.500" fill="#c8c8c8" /><ellipse cx="5" cy="11" rx="4" ry="3" fill="#f5f5f5" /><path d="M13 6 V8 M18 6 L17 8 M14 14 V16 M19 15 L18 13 M15 11 H21 L19 9 M21 11 L19 13" /></> },
  { name: '清除选择', d: <><path d="M12 7 L16 1 L19 3 L16 9 L20 11 L18 15 L6 9 L8 5 Z" /><path d="M5 11 L17 17 L13 22 L2 15 Z" fill="#a0a0a0" /></> },
  { name: '添加选择', d: <><circle cx="12" cy="12" r="9" /><path d="M12 8 V16 M8 12 H16" strokeWidth="1.800" /></> },
];

function PickToolbar() {
  return (
    <div className="mr-2.5 flex pb-2.5">
      {PICK_TOOLS.map((t) => (
        <label key={t.name} className="flex w-[65px] items-center gap-1.5 last:w-12">
          <input type="checkbox" aria-label={t.name} className="h-[17px] w-[17px] appearance-none border border-[#bdbdbd] bg-[#eeeeee] checked:bg-[#9bd0ee]" />
          <svg className="h-6 w-6" viewBox="0 0 24 24" fill="none" stroke="#a8a8a8" strokeWidth="1.300">{t.d}</svg>
        </label>
      ))}
    </div>
  );
}

function ColorScale() {
  return (
    <div className="flex w-[84px] flex-col pt-[15px] pb-[21px] font-['Liberation_Mono',monospace] text-[15px] leading-5">
      <div className="flex items-center gap-1">
        <span className="h-[21px] w-[21px] border border-black bg-[#ff0000]" />
        <span className="text-sm">[mm]</span>
      </div>
      <div className="mt-1 mb-1 flex min-h-0 flex-1">
        <div className="flex w-[21px] flex-col border border-black bg-[linear-gradient(to_bottom,#ff0000_0%,#ff8000_12%,#ffff00_24%,#00ff00_49%,#00ff80_61%,#00ffff_73%,#0080ff_86%,#0000ff_96%)]">
          {SCALE.slice(1).map((s) => (
            <span key={s} className="flex-1 border-b border-black last:border-b-0" />
          ))}
        </div>
        <ul className="flex flex-col justify-between pb-0.5 pl-0.5">
          {SCALE.map((s) => (
            <li key={s} className="flex h-0 items-center whitespace-nowrap">{s}</li>
          ))}
        </ul>
      </div>
      <span className="h-[21px] w-[21px] border border-black bg-[#0000ff]" />
    </div>
  );
}

function Viewport() {
  return (
    <main className="relative flex min-w-0 flex-1 overflow-hidden bg-[#f5f5f5]">
      <div className="absolute inset-0">
        <svg className="h-[936px] w-[1490px]" viewBox="194 119 1490 936">
          <CylinderHead />
          <Leaders />
          <AxisCube />
        </svg>
        {CALLOUTS.map((c) => <Callout key={c.id} c={c} />)}
      </div>
      <div className="relative flex w-[138px] items-center pb-[30px] pl-3.5">
        <button aria-label="收起左侧面板">
          <svg className="h-2.5 w-[5px]" viewBox="0 0 5 10"><path d="M5 0 L0 5 L5 10 Z" fill="#555" /></svg>
        </button>
      </div>
      <div className="relative flex flex-1 flex-col items-center justify-between">
        <ViewToolbar />
        <PickToolbar />
      </div>
      <div className="relative flex w-[100px]">
        <ColorScale />
        <button aria-label="收起右侧面板" className="-ml-1 pb-[30px]">
          <svg className="h-2.5 w-[5px]" viewBox="0 0 5 10"><path d="M0 0 L5 5 L0 10 Z" fill="#555" /></svg>
        </button>
      </div>
    </main>
  );
}

function App() {
  const [menu, setMenu] = useState('检测');
  return (
    <div className="flex h-screen w-full flex-col overflow-hidden bg-[#f0f0f0] font-['Noto_Sans','Noto_Sans_CJK_SC',sans-serif] text-black">
      <TitleBar />
      <MenuBar active={menu} onSelect={setMenu} />
      <Ribbon />
      <div className="flex min-h-0 flex-1">
        <ModelTree />
        <Viewport />
        <aside className="w-[236px] shrink-0 border-l border-[#bdbdbd] bg-[#f0f0f0]" />
      </div>
      <footer className="shrink-0">
        <p className="h-[23px] bg-[#d1d1d1] pl-5 text-[15px] leading-[23px]">就绪</p>
        <div className="flex h-0.5 bg-[#444]">
          <span className="w-[490px] bg-[#f0f0f0]" />
          <span className="ml-[372px] w-[61px] bg-[#777]" />
        </div>
      </footer>
    </div>
  );
}

export default App;
